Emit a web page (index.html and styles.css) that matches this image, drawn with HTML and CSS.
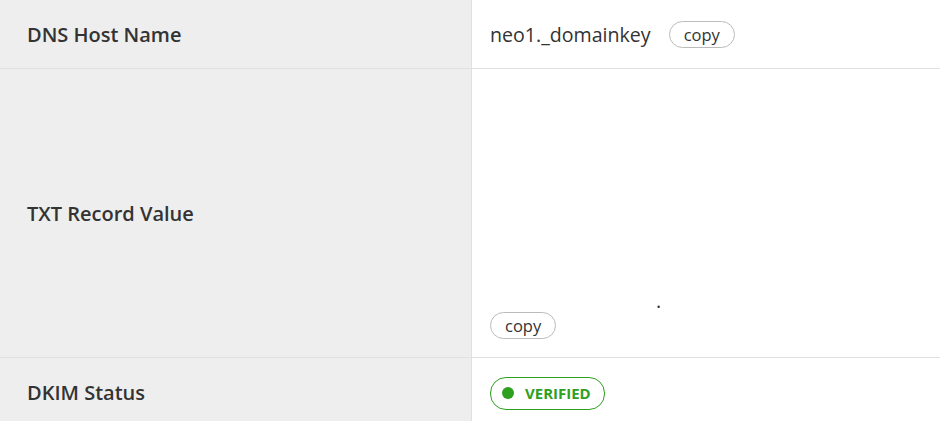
FILE: index.html
```html
<!DOCTYPE html>
<html lang="en">
<head>
  <meta charset="UTF-8" />
  <title>DKIM Record</title>
  <link rel="stylesheet" href="styles.css">
</head>
<body>
  <div class="record">
    <div class="row row-host">
      <div class="label">DNS Host Name</div>
      <div class="value">
        <span class="host">neo1._domainkey</span>
        <button class="copy">copy</button>
      </div>
    </div>

    <div class="row row-txt">
      <div class="label">TXT Record Value</div>
      <div class="value value-txt">
        <div class="txt-key"><span class="key-end">.</span></div>
        <button class="copy">copy</button>
      </div>
    </div>

    <div class="row row-status">
      <div class="label">DKIM Status</div>
      <div class="value">
        <span class="badge"><span class="dot"></span>VERIFIED</span>
      </div>
    </div>
  </div>
</body>
</html>
```

FILE: styles.css
```css
body {
  margin: 0;
  font-family: "Open Sans", Arial, sans-serif;
  background: #fff;
  color: #333;
}
.record {
  display: flex;
  flex-direction: column;
}
.row {
  display: grid;
  grid-template-columns: 472px 1fr;
  border-bottom: 1px solid #e0e0e0;
}
.row-host {
  height: 68px;
}
.row-txt {
  height: 288px;
}
.row-status {
  height: 68px;
  border-bottom: none;
}
.label {
  background: #eeeeee;
  border-right: 1px solid #e0e0e0;
  display: flex;
  align-items: center;
  padding-left: 27px;
  font-size: 20px;
  font-weight: 600;
  color: #333;
}
.value {
  display: flex;
  align-items: center;
  padding-left: 18px;
  font-size: 19.6px;
  color: #333;
}
.host {
  margin-right: 18px;
}
.copy {
  font-family: inherit;
  font-size: 16.5px;
  color: #333;
  background: #fff;
  border: 1px solid #bbb;
  border-radius: 14px;
  height: 27px;
  padding: 0 14px;
  line-height: 25px;
  cursor: pointer;
}
.value-txt {
  flex-direction: column;
  align-items: flex-start;
  justify-content: flex-end;
  padding-bottom: 18px;
}
.txt-key {
  height: 22px;
  line-height: 22px;
}
.key-end {
  display: inline-block;
  padding-left: 166px;
}
.badge {
  display: inline-flex;
  align-items: center;
  gap: 11px;
  height: 31px;
  padding: 0 13px 0 11px;
  border: 1px solid #2ea01f;
  border-radius: 16px;
  color: #2ea01f;
  font-size: 15px;
  font-weight: 700;
  margin-top: 2px;
}
.dot {
  width: 12px;
  height: 12px;
  border-radius: 50%;
  background: #2ea01f;
}
```
